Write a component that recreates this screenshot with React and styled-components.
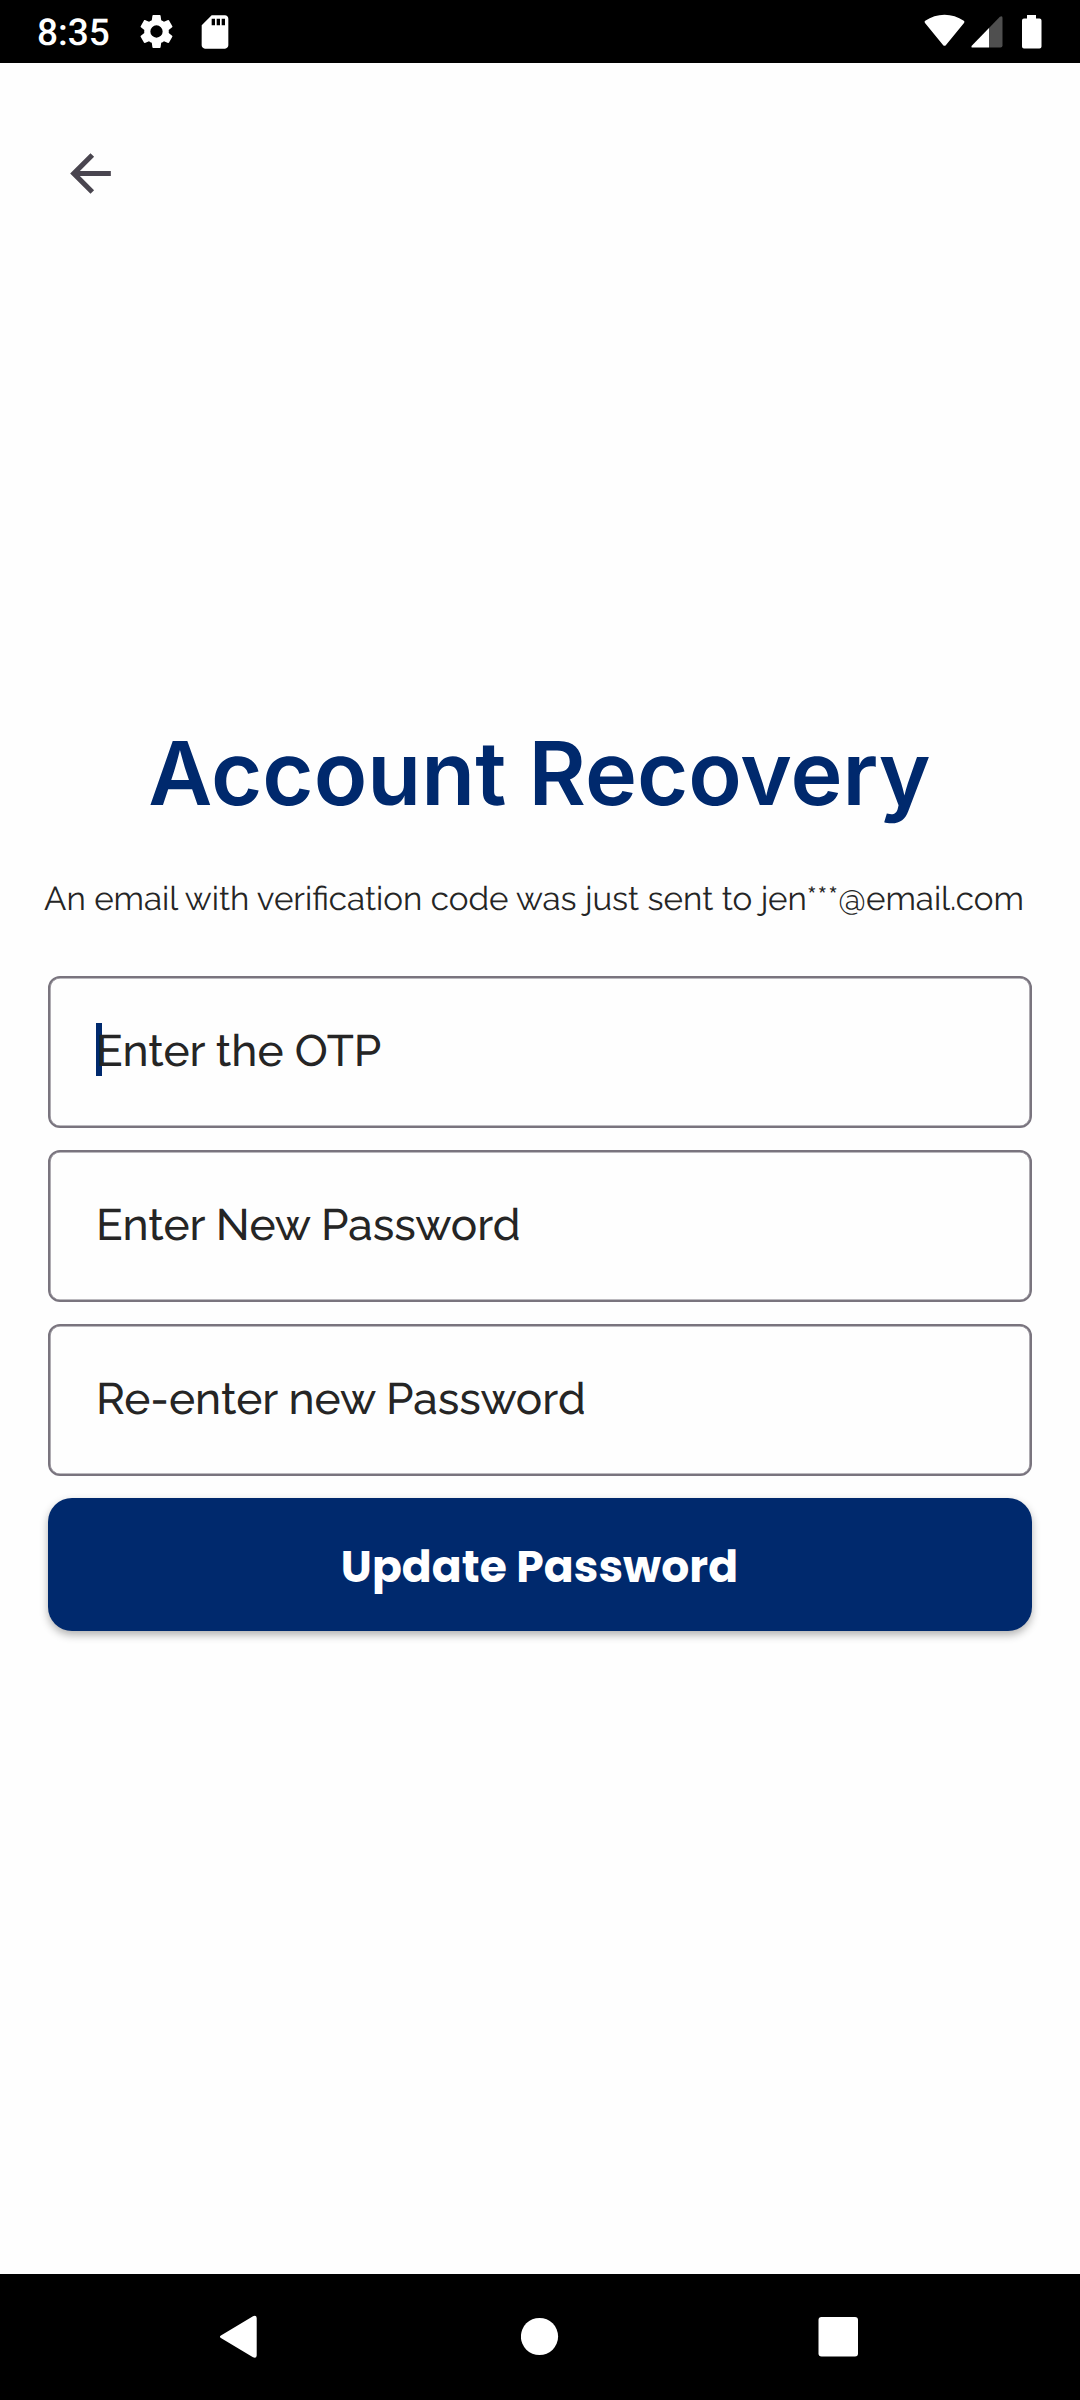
import React from "react";
import styled, { createGlobalStyle } from "styled-components";

const NAVY = "#00296d";
const OUTLINE = "#79747e";

const GlobalStyle = createGlobalStyle`
  *, *::before, *::after { box-sizing: border-box; }
  body { margin: 0; background: #fefefe; text-rendering: geometricPrecision; }
`;

const Screen = styled.div`
  display: flex;
  flex-direction: column;
  width: 1080px;
  height: 2400px;
  overflow: hidden;
  background: #fefefe;
`;

const StatusBar = styled.header`
  display: flex;
  align-items: center;
  justify-content: space-between;
  flex: none;
  height: 63px;
  padding: 0 32px 0 37px;
  background: #000;
`;

const StatusGroup = styled.div`
  display: flex;
  align-items: center;
`;

const Clock = styled.span`
  width: 99px;
  padding-top: 5px;
  color: #fff;
  font: 500 37px/44px Roboto, sans-serif;
`;

const StatusIcon = styled.svg`
  display: block;
  width: ${(p) => p.$w}px;
  height: ${(p) => p.$h}px;
  margin-left: ${(p) => p.$gap || 0}px;
  fill: #fff;
  overflow: visible;
`;

const TopBar = styled.div`
  flex: none;
  padding: 80px 0 0 60px;
`;

const BackButton = styled.button`
  display: block;
  width: 61px;
  height: 61px;
  padding: 0;
  border: 0;
  background: none;
  svg {
    display: block;
    fill: #49454f;
  }
`;

const Content = styled.main`
  display: flex;
  flex-direction: column;
  flex: 1;
  padding: 517px 48px 0;
`;

const Title = styled.h1`
  margin: 0;
  padding-right: 1px;
  color: ${NAVY};
  text-align: center;
  font: 600 88px/106px Inter, sans-serif;
  letter-spacing: 0.06px;
  white-space: nowrap;
`;

const Subtitle = styled.p`
  margin: 50px -4px 0;
  color: #252525;
  font: 400 33.12px/44px Raleway, Lato, sans-serif;
  white-space: nowrap;
`;

const Form = styled.form`
  display: flex;
  flex-direction: column;
  gap: 21.6px;
  margin-top: 55px;
`;

const Field = styled.label`
  display: flex;
  align-items: flex-start;
  height: 152.4px;
  padding: 45px 46px;
  border: 2px solid ${OUTLINE};
  border-radius: 12px;
  box-shadow: inset 0 0 0 0.6px ${OUTLINE};
  color: #252525;
  font: 500 44.15px/56px Raleway, Lato, sans-serif;
`;

const Caret = styled.span`
  width: 5.5px;
  height: 53px;
  margin-right: -5.5px;
  background: ${NAVY};
`;

const SubmitButton = styled.button`
  height: 133.5px;
  padding: 5px 1px 0 0;
  border: 0;
  border-radius: 24px;
  background: ${NAVY};
  color: #fff;
  font: 700 44px/66px Poppins, Inter, sans-serif;
  letter-spacing: 0.08px;
  box-shadow: 0 4px 9px rgba(0, 0, 0, 0.3);
`;

const NavBar = styled.nav`
  display: flex;
  align-items: center;
  flex: none;
  height: 126px;
  padding-left: 219px;
  background: #000;
`;

const NavIcon = styled.svg`
  display: block;
  width: ${(p) => p.$w}px;
  height: 44px;
  margin-right: ${(p) => p.$gap || 0}px;
  fill: #fff;
`;

const fields = ["Enter the OTP", "Enter New Password", "Re-enter new Password"];

export default function App() {
  return (
    <Screen>
      <GlobalStyle />
      <StatusBar>
        <StatusGroup>
          <Clock>8:35</Clock>
          <StatusIcon $w={41} $h={41} viewBox="0 0 24 24">
            <path d="M19.14 12.94c.04-.3.06-.61.06-.94 0-.32-.02-.64-.07-.94l2.03-1.58a.49.49 0 0 0 .12-.61l-1.92-3.32a.488.488 0 0 0-.59-.22l-2.39.96c-.5-.38-1.03-.7-1.62-.94l-.36-2.54a.484.484 0 0 0-.48-.41h-3.84c-.24 0-.43.17-.47.41l-.36 2.54c-.59.24-1.13.57-1.62.94l-2.39-.96c-.22-.08-.47 0-.59.22L2.74 8.87c-.12.21-.08.47.12.61l2.03 1.58c-.05.3-.09.63-.09.94s.02.64.07.94l-2.03 1.58a.49.49 0 0 0-.12.61l1.92 3.32c.12.22.37.29.59.22l2.39-.96c.5.38 1.03.7 1.62.94l.36 2.54c.05.24.24.41.48.41h3.84c.24 0 .44-.17.47-.41l.36-2.54c.59-.24 1.13-.56 1.62-.94l2.39.96c.22.08.47 0 .59-.22l1.92-3.32c.12-.22.07-.47-.12-.61l-2.01-1.58zM12 15.6A3.6 3.6 0 1 1 12 8.4a3.6 3.6 0 0 1 0 7.2z" />
          </StatusIcon>
          <StatusIcon $w={40} $h={40} $gap={18} viewBox="0 0 24 24">
            <path d="M18 2h-8L4.02 8 4 20c0 1.1.9 2 2 2h12c1.1 0 2-.9 2-2V4c0-1.1-.9-2-2-2zm-6 6h-2V4h2v4zm3 0h-2V4h2v4zm3 0h-2V4h2v4z" />
          </StatusIcon>
        </StatusGroup>
        <StatusGroup>
          <StatusIcon $w={41} $h={34} viewBox="0 1.3 41 34">
            <path d="M1 9.2Q-.1 8 1.2 7.1Q10 1 20.5 1T39.800 7.1Q41.1 8 40 9.2L22 31.3Q20.500 33 19 31.3Z" />
          </StatusIcon>
          <StatusIcon $w={32} $h={34} $gap={6} viewBox="0 0.5 32 34">
            <path d="M28.900 2.3Q31.500 .5 31.500 3.500V31Q31.500 33 29.500 33H18V13.500Z" fillOpacity="0.31" />
            <path d="M18 13.500V33H1.800Q-.6 33 1 31Z" />
          </StatusIcon>
          <StatusIcon $w={26} $h={34} $gap={19} viewBox="0 0 26 34">
            <path d="M5 0H14V3.500H17.500Q19.500 3.500 19.500 5.500V31.500Q19.500 33.500 17.500 33.500H2Q0 33.500 0 31.500V5.500Q0 3.500 2 3.500H5Z" />
          </StatusIcon>
        </StatusGroup>
      </StatusBar>

      <TopBar>
        <BackButton type="button" aria-label="Back">
          <svg width="61" height="61" viewBox="0 0 24 24">
            <path d="M20 11H7.830l5.590-5.590L12 4l-8 8 8 8 1.410-1.410L7.830 13H20v-2z" />
          </svg>
        </BackButton>
      </TopBar>

      <Content>
        <Title>Account Recovery</Title>
        <Subtitle>An email with verification code was just sent to jen***@email.com</Subtitle>
        <Form>
          {fields.map((text, i) => (
            <Field key={text}>
              {i === 0 && <Caret />}
              {text}
            </Field>
          ))}
          <SubmitButton type="button">Update Password</SubmitButton>
        </Form>
      </Content>

      <NavBar>
        <NavIcon $w={38} $gap={264} viewBox="0 0 38 44">
          <path d="M2.300 20.200L34 1.200Q37.500-.2 37.700 3V40.500Q37.500 43.700 34 42.300L2.300 23.300Q-.5 21.700 2.300 20.200Z" />
        </NavIcon>
        <NavIcon $w={38} $gap={259} viewBox="0 0 38 44">
          <circle cx="18.500" cy="21.500" r="18.600" />
        </NavIcon>
        <NavIcon $w={42} viewBox="0 0 42 44">
          <rect x="0.500" y="2" width="39.500" height="39.500" rx="3" />
        </NavIcon>
      </NavBar>
    </Screen>
  );
}
